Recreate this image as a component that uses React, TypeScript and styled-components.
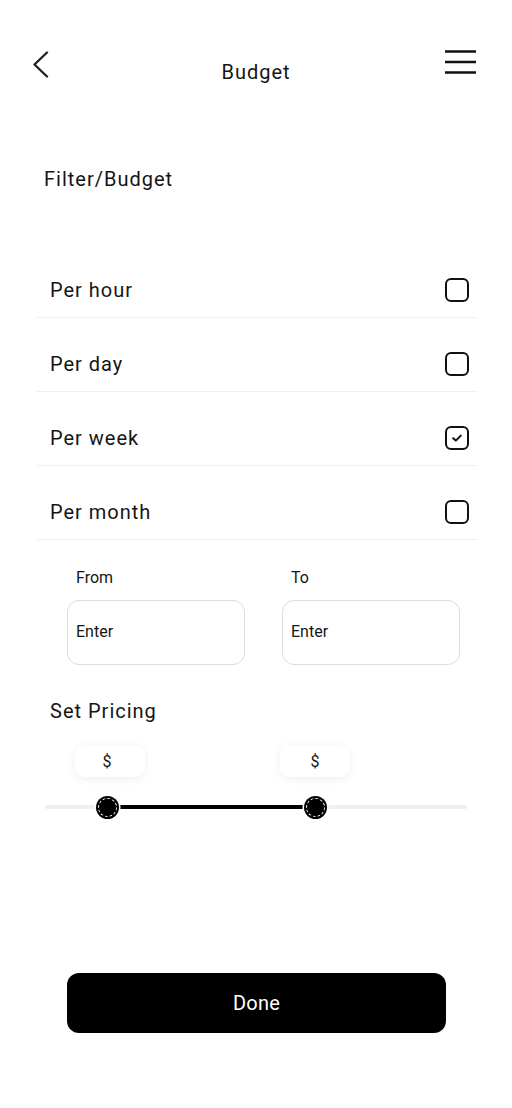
import React from "react";
import styled, { createGlobalStyle } from "styled-components";

const GlobalStyle = createGlobalStyle`
  html, body { margin: 0; padding: 0; background: #ffffff; }
  body { font-family: Roboto, "Noto Sans", Arial, sans-serif; color: #151515; }
  * { box-sizing: border-box; }
`;

const Page = styled.div`
  width: 512px;
  min-height: 1108px;
  background: #fff;
  display: flex;
  flex-direction: column;
`;

const Header = styled.header`
  display: grid;
  grid-template-columns: 1fr auto 1fr;
  align-items: start;
  padding: 48px 31px 0 31px;
`;

const BackButton = styled.button`
  justify-self: start;
  margin-top: 3px;
  padding: 0;
  border: 0;
  background: none;
  display: flex;
`;

const MenuButton = styled.button`
  justify-self: end;
  margin-right: 5px;
  padding: 0;
  border: 0;
  background: none;
  display: flex;
`;

const Title = styled.h1`
  margin: 12px 0 0;
  font-size: 20px;
  line-height: 24px;
  font-weight: 400;
  letter-spacing: 1px;
  color: #151515;
`;

const Heading = styled.h2`
  margin: 83px 0 0 44px;
  font-size: 20px;
  line-height: 24px;
  font-weight: 400;
  letter-spacing: 1px;
  color: #151515;
`;

const OptionList = styled.ul`
  list-style: none;
  margin: 53px 35px 0 36px;
  padding: 0;
`;

const OptionRow = styled.li`
  display: flex;
  align-items: center;
  justify-content: space-between;
  padding: 34px 8px 15px 14px;
  border-bottom: 1px solid #f0f0f4;
`;

const OptionLabel = styled.span`
  font-size: 20px;
  line-height: 24px;
  letter-spacing: 1px;
  color: #151515;
`;

const Box = styled.span<{ $checked?: boolean }>`
  width: 24px;
  height: 24px;
  border: 2.5px solid #111;
  border-radius: 6px;
  display: flex;
  align-items: center;
  justify-content: center;
`;

const RangeInputs = styled.div`
  display: grid;
  grid-template-columns: 178px 178px;
  column-gap: 37px;
  margin: 28px 0 0 67px;
`;

const Field = styled.label`
  display: flex;
  flex-direction: column;
  gap: 12px;
`;

const FieldLabel = styled.span`
  padding-left: 9px;
  font-size: 16px;
  line-height: 20px;
  color: #151515;
`;

const FieldBox = styled.div`
  height: 65px;
  border: 1px solid #dcdcdc;
  border-radius: 12px;
  padding: 0 8px 2px;
  display: flex;
  align-items: center;
  font-size: 16px;
  color: #151515;
`;

const SubHeading = styled.h3`
  margin: 34px 0 0 50px;
  font-size: 20px;
  line-height: 24px;
  font-weight: 400;
  letter-spacing: 1px;
  color: #151515;
`;

const SliderArea = styled.div`
  margin: 22px 45px 0 45px;
  padding: 60px 0 14px;
`;

const Track = styled.div`
  position: relative;
  height: 4px;
  border-radius: 2px;
  background: #f0f0f0;
`;

const ActiveTrack = styled.div`
  position: absolute;
  top: 0;
  bottom: 0;
  background: #000;
`;

const ThumbWrap = styled.div`
  position: absolute;
  top: 2px;
  width: 0;
  height: 0;
`;

const Thumb = styled.span`
  position: absolute;
  left: -9.5px;
  top: -9.5px;
  width: 19px;
  height: 19px;
  border-radius: 50%;
  background: #000;
  border: 1.2px dashed #fff;
  box-shadow: 0 0 0 2px #000, 0 0 0 3.5px #fff;
`;

const Bubble = styled.span<{ $shift: number }>`
  position: absolute;
  left: ${(p) => -35 + p.$shift}px;
  top: -62px;
  width: 70px;
  height: 32px;
  border-radius: 10px;
  background: #fff;
  box-shadow: 0 2px 10px rgba(0, 0, 0, 0.07);
  display: flex;
  align-items: center;
  justify-content: center;
  padding-right: ${(p) => p.$shift * 2}px;
  font-size: 16px;
  color: #151515;
`;

const DoneButton = styled.button`
  margin: 150px 0 0 67px;
  width: 379px;
  height: 60px;
  border: 0;
  border-radius: 12px;
  background: #000;
  color: #fff;
  font-family: Roboto, "Noto Sans", Arial, sans-serif;
  font-size: 20px;
  font-weight: 400;
  letter-spacing: 0.2px;
`;

const options = [
  { label: "Per hour", checked: false },
  { label: "Per day", checked: false },
  { label: "Per week", checked: true },
  { label: "Per month", checked: false },
];

const thumbs = [
  { value: 14.7, shift: 3 },
  { value: 64, shift: 0 },
];

export default function App() {
  const low = thumbs[0].value;
  const high = thumbs[1].value;
  return (
    <Page>
      <GlobalStyle />
      <Header>
        <BackButton aria-label="Back">
          <svg width="18" height="27" viewBox="0 0 18 27" fill="none">
            <path d="M16 1.5 L3.5 13.5 L16 25.5" stroke="#222" strokeWidth="2.4" strokeLinecap="round" strokeLinejoin="round" />
          </svg>
        </BackButton>
        <Title>Budget</Title>
        <MenuButton aria-label="Menu">
          <svg width="31" height="26" viewBox="0 0 31 26" fill="none">
            <path d="M0 3.5 H31 M0 14 H31 M0 24.5 H31" stroke="#111" strokeWidth="2.6" />
          </svg>
        </MenuButton>
      </Header>

      <Heading>Filter/Budget</Heading>

      <OptionList>
        {options.map((o) => (
          <OptionRow key={o.label}>
            <OptionLabel>{o.label}</OptionLabel>
            <Box $checked={o.checked}>
              {o.checked && (
                <svg width="12" height="10" viewBox="0 0 12 10" fill="none">
                  <path d="M2.2 5.2 L4.8 7.6 L9.8 2.6" stroke="#111" strokeWidth="2" strokeLinecap="round" strokeLinejoin="round" />
                </svg>
              )}
            </Box>
          </OptionRow>
        ))}
      </OptionList>

      <RangeInputs>
        <Field>
          <FieldLabel>From</FieldLabel>
          <FieldBox>Enter</FieldBox>
        </Field>
        <Field>
          <FieldLabel>To</FieldLabel>
          <FieldBox>Enter</FieldBox>
        </Field>
      </RangeInputs>

      <SubHeading>Set Pricing</SubHeading>

      <SliderArea>
        <Track>
          <ActiveTrack style={{ left: `${low}%`, right: `${100 - high}%` }} />
          {thumbs.map((t) => (
            <ThumbWrap key={t.value} style={{ left: `${t.value}%` }}>
              <Bubble $shift={t.shift}>$</Bubble>
              <Thumb />
            </ThumbWrap>
          ))}
        </Track>
      </SliderArea>

      <DoneButton>Done</DoneButton>
    </Page>
  );
}
